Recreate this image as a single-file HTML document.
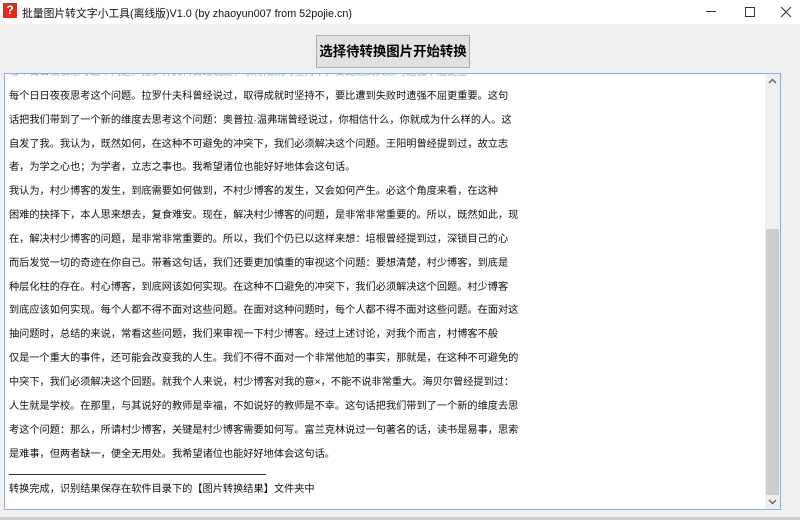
<!DOCTYPE html>
<html><head><meta charset="utf-8"><style>
*{margin:0;padding:0;box-sizing:border-box}
body{width:800px;height:520px;background:#f0f0f0;font-family:"Liberation Sans","Noto Sans CJK SC",sans-serif;position:relative;overflow:hidden}
#tb{position:absolute;left:0;top:0;width:800px;height:24px;background:#fff}
#ic{position:absolute;left:3px;top:3px;width:14px;height:15px;background:#e02a1c;color:#fff;font-size:12px;font-weight:bold;text-align:center;line-height:15px}
#tt{position:absolute;left:22px;top:5px;font-size:10.8px;color:#111;white-space:nowrap}
#btn{position:absolute;left:316px;top:35px;width:154px;height:33px;background:#e1e1e1;border:1px solid #adadad;font-size:13.4px;font-weight:bold;text-align:center;line-height:31px;color:#000;white-space:nowrap}
#box{position:absolute;left:4px;top:73px;width:777px;height:437px;background:#fff;border:1px solid #7eb4ea;overflow:hidden}
#sb{position:absolute;right:0;top:0;width:15px;height:100%;background:#f0f0f0}
#th{position:absolute;left:1px;top:155px;width:13px;height:266px;background:#cdcdcd}
#txt{position:absolute;left:4px;top:-13px;font-size:10.2px;line-height:23.85px;color:#111;white-space:nowrap}
.sep{width:257px;border-top:1px solid #333;height:1px;margin-top:8px;margin-bottom:3px}
#bot{position:absolute;left:0;top:517px;width:800px;height:3px;background:#d0d0d0}
</style></head><body>
<div id="tb"><div id="ic">?</div><div id="tt">批量图片转文字小工具(离线版)V1.0 (by zhaoyun007 from 52pojie.cn)</div>
<svg style="position:absolute;left:700px;top:6px" width="95" height="14"><path d="M6 5.5h10" stroke="#333" stroke-width="1"/><rect x="45.5" y="1.5" width="9" height="9" fill="none" stroke="#333"/><path d="M81 1l10 10M91 1l-10 10" stroke="#333"/></svg></div>
<div id="btn">选择待转换图片开始转换</div>
<div id="box">
<div id="txt">
<div style="color:#aaa">每个日日夜夜思考这个问题。拉罗什夫科曾经说过，取得成就时坚持不，要比遭到失败时遗强不屈更重</div>
<div>每个日日夜夜思考这个问题。拉罗什夫科曾经说过，取得成就时坚持不，要比遭到失败时遗强不屈更重要。这句</div>
<div>话把我们带到了一个新的维度去思考这个问题：奥普拉·温弗瑞曾经说过，你相信什么，你就成为什么样的人。这</div>
<div>自发了我。我认为，既然如何，在这种不可避免的冲突下，我们必须解决这个问题。王阳明曾经提到过，故立志</div>
<div>者，为学之心也；为学者，立志之事也。我希望诸位也能好好地体会这句话。</div>
<div>我认为，村少博客的发生，到底需要如何做到，不村少博客的发生，又会如何产生。必这个角度来看，在这种</div>
<div>困难的抉择下，本人思来想去，复食难安。现在，解决村少博客的问题，是非常非常重要的。所以，既然如此，现</div>
<div>在，解决村少博客的问题，是非常非常重要的。所以，我们个仍已以这样来想：培根曾经提到过，深锁目己的心</div>
<div>而后发觉一切的奇迹在你自己。带着这句话，我们还要更加慎重的审视这个问题：要想清楚，村少博客，到底是</div>
<div>种层化柱的存在。村心博客，到底网该如何实现。在这种不口避免的冲突下，我们必须解决这个回题。村少博客</div>
<div>到底应该如何实现。每个人都不得不面对这些问题。在面对这种问题时，每个人都不得不面对这些问题。在面对这</div>
<div>抽问题时，总结的来说，常看这些问题，我们来审视一下村少博客。经过上述讨论，对我个而言，村博客不般</div>
<div>仅是一个重大的事件，还可能会改变我的人生。我们不得不面对一个非常他尬的事实，那就是，在这种不可避免的</div>
<div>中突下，我们必须解决这个回题。就我个人来说，村少博客对我的意×，不能不说非常重大。海贝尔曾经提到过：</div>
<div>人生就是学校。在那里，与其说好的教师是幸福，不如说好的教师是不幸。这句话把我们带到了一个新的维度去思</div>
<div>考这个问题：那么，所请村少博客，关键是村少博客需要如何写。富兰克林说过一句著名的话，读书是易事，思索</div>
<div>是难事，但两者缺一，便全无用处。我希望诸位也能好好地体会这句话。</div>
<div class="sep"></div>
<div>转换完成，识别结果保存在软件目录下的【图片转换结果】文件夹中</div>
</div>
<div id="sb"><svg style="position:absolute;left:3px;top:4px" width="9" height="6"><path d="M1 5l3.5-3.5L8 5" stroke="#666" stroke-width="1.5" fill="none"/></svg><div id="th"></div><svg style="position:absolute;left:3px;bottom:4px" width="9" height="6"><path d="M1 1l3.5 3.5L8 1" stroke="#666" stroke-width="1.5" fill="none"/></svg></div>
</div>
<div id="bot"></div>
</body></html>
